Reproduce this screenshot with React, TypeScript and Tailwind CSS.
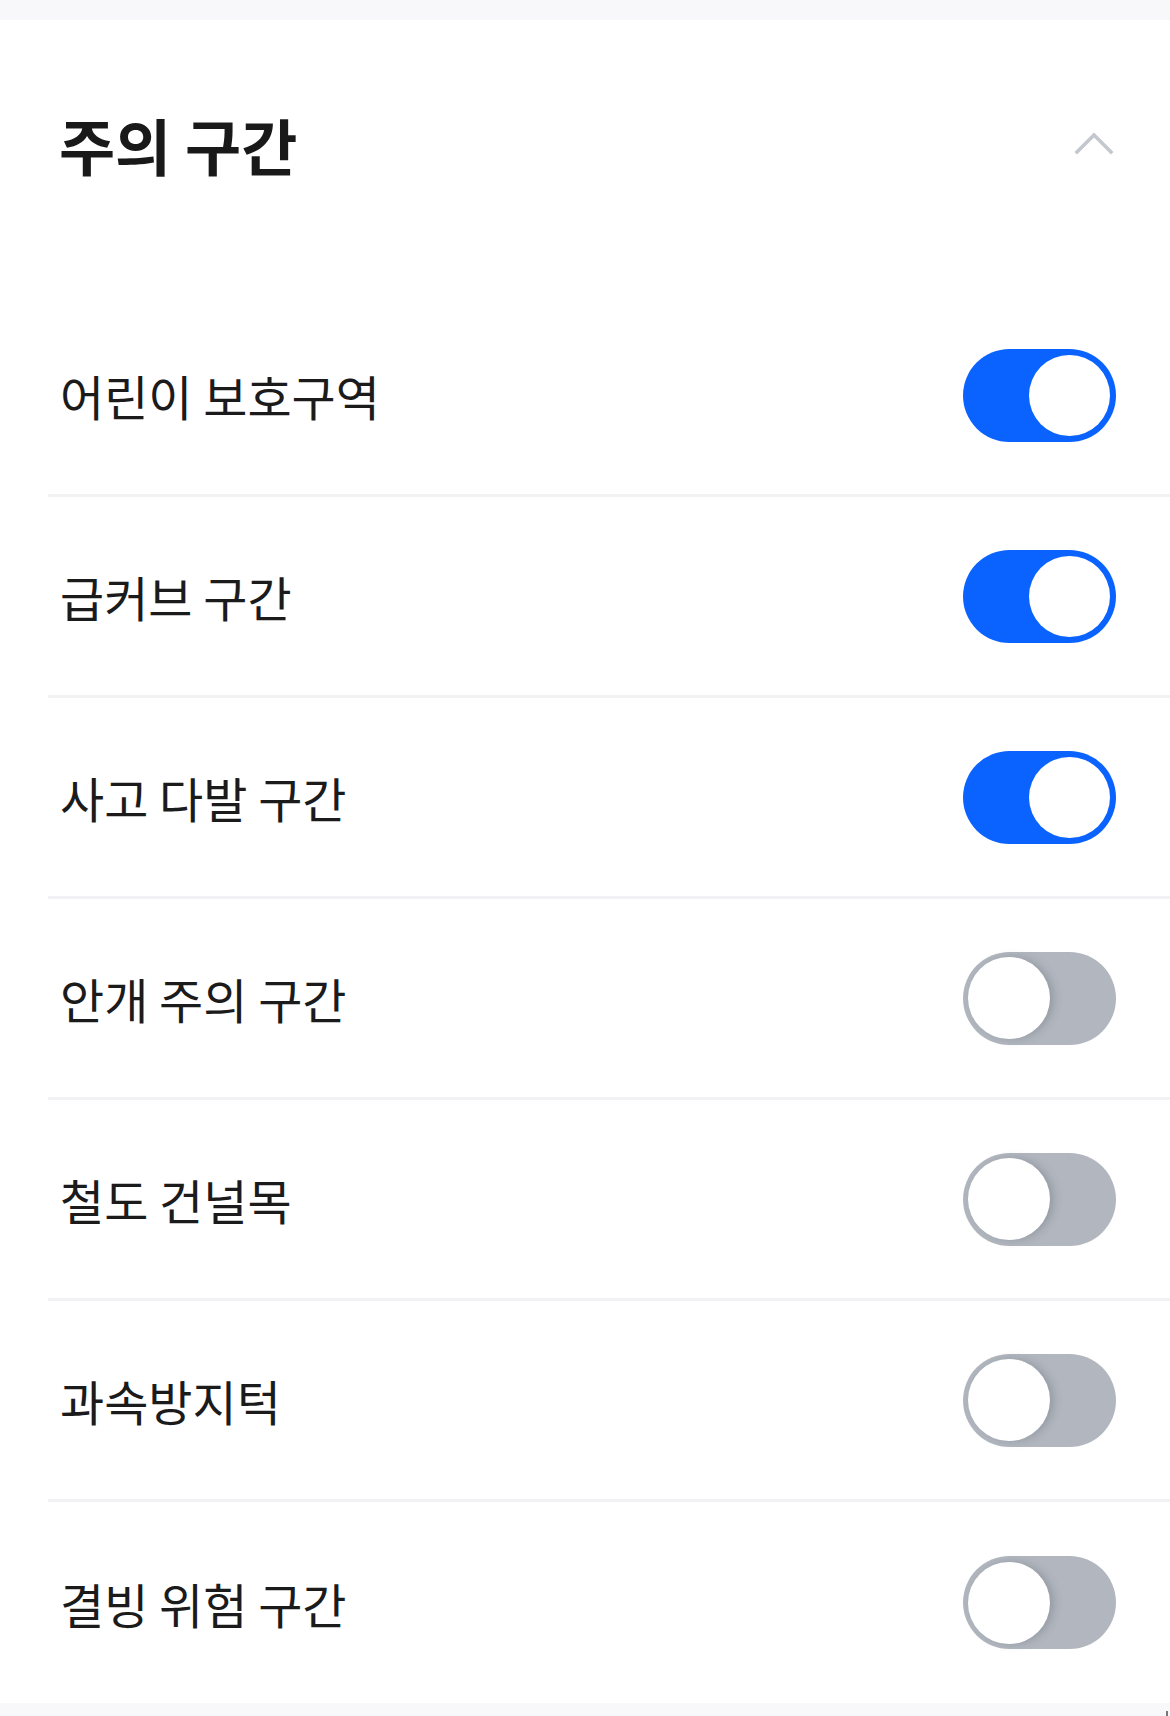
import React from "react";

const items: { label: string; on: boolean }[] = [
  { label: "어린이 보호구역", on: true },
  { label: "급커브 구간", on: true },
  { label: "사고 다발 구간", on: true },
  { label: "안개 주의 구간", on: false },
  { label: "철도 건널목", on: false },
  { label: "과속방지턱", on: false },
  { label: "결빙 위험 구간", on: false },
];

function Toggle({ on }: { on: boolean }) {
  return on ? (
    <div className="flex h-[93px] w-[153px] items-center justify-end rounded-full bg-[#0b63ff] pr-[6px]">
      <div className="h-[81px] w-[81px] rounded-full bg-white" />
    </div>
  ) : (
    <div className="flex h-[93px] w-[153px] items-center justify-start rounded-full bg-[#b2b7bf] pl-[5px]">
      <div className="h-[82px] w-[82px] rounded-full bg-white shadow-[4px_0_8px_rgba(60,70,85,0.25)]" />
    </div>
  );
}

export default function App() {
  return (
    <div
      className="flex min-h-[1716px] w-full flex-col bg-white"
      style={{ fontFamily: '"Noto Sans CJK KR", "Noto Sans", sans-serif' }}
    >
      <div className="h-[20px] w-full bg-[#f8f8fa]" />
      <div className="flex h-[248px] items-center justify-between pl-[59px] pr-[56px]">
        <h1 className="text-[61px] font-bold leading-none text-[#191919]">주의 구간</h1>
        <svg width="40" height="24" viewBox="0 0 40 24" fill="none" className="mb-[2px]">
          <path d="M3 21 L20 4 L37 21" stroke="#c3c7ce" strokeWidth="3.5" strokeLinecap="square" />
        </svg>
      </div>
      <div className="mt-[28px] flex flex-col pl-[48px]">
        {items.map((it, i) => (
          <div
            key={it.label}
            className={
              i < items.length - 1
                ? "flex h-[201px] items-center justify-between border-b-[3px] border-[#f2f2f5] pl-[12px] pr-[54px]"
                : "flex h-[201px] items-center justify-between pl-[12px] pr-[54px]"
            }
          >
            <span className="text-[48px] font-normal leading-none text-[#1b1b1b]">{it.label}</span>
            <Toggle on={it.on} />
          </div>
        ))}
      </div>
      <div className="flex h-[13px] w-full items-end justify-end bg-[#f8f8fa] pr-[2px]">
        <div className="h-[5px] w-[2px] bg-[#777]" />
      </div>
    </div>
  );
}
